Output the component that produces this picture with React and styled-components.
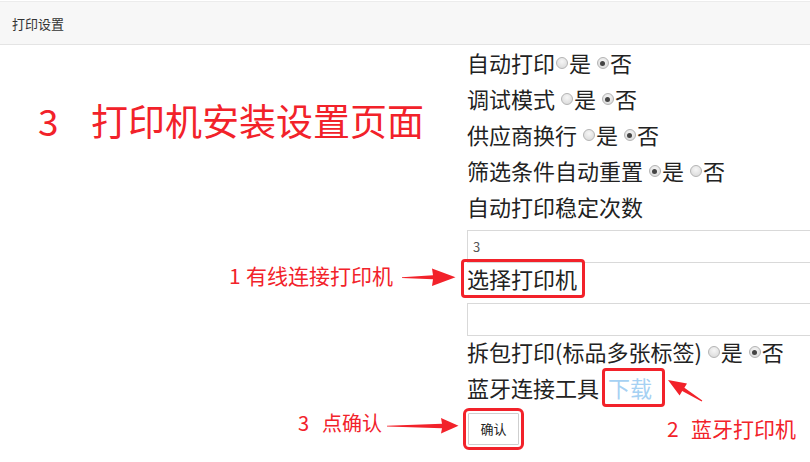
import React from "react";
import styled, { createGlobalStyle } from "styled-components";

const RED = "#f2222a";
const FONT = `"Noto Sans CJK SC", "Noto Sans", "Liberation Sans", sans-serif`;

const Global = createGlobalStyle`
  html, body { margin: 0; padding: 0; background: #fff; }
  body { font-family: ${FONT}; overflow: hidden; }
`;

const Page = styled.div`
  position: relative;
  width: 810px;
  height: 462px;
  overflow: hidden;
  background: #fff;
`;

const Header = styled.header`
  height: 42px;
  margin-top: 1px;
  border-top: 1px solid #ececec;
  border-bottom: 1px solid #e4e4e4;
  background: #f7f7f7;
  display: flex;
  align-items: center;
  padding-left: 12px;
  font-size: 13px;
  color: #333;
`;

const Body = styled.main`
  display: flex;
`;

const LeftPane = styled.section`
  width: 467px;
  flex: none;
  padding-top: 53px;
  box-sizing: border-box;
`;

const Title = styled.h1`
  margin: 0 0 0 38px;
  font-size: 37px;
  line-height: 44px;
  font-weight: 400;
  color: ${RED};
  display: flex;
`;

const TitleNum = styled.span`
  width: 53px;
`;

const Form = styled.section`
  flex: 1;
  padding-top: 2px;
  font-size: 22px;
  color: #222;
`;

const Row = styled.div`
  display: flex;
  align-items: center;
  height: 36px;
  box-sizing: border-box;
  padding-bottom: 6px;
  line-height: 30px;
  white-space: pre;
`;

const RadioDot = styled.span`
  display: inline-block;
  width: 12px;
  height: 12px;
  box-sizing: border-box;
  border-radius: 50%;
  border: 1px solid #b4b4b4;
  background: radial-gradient(circle at 50% 35%, #f6f6f6 0%, #d6d6d6 100%);
  margin: 2px 1px 0 1px;
  position: relative;
  &::after {
    content: "";
    display: ${(p) => (p.$checked ? "block" : "none")};
    position: absolute;
    left: 2.5px;
    top: 2.5px;
    width: 5px;
    height: 5px;
    border-radius: 50%;
    background: #444;
  }
`;

const TextInput = styled.div`
  width: 360px;
  height: 33px;
  box-sizing: border-box;
  border: 1px solid #d9d9d9;
  margin-top: ${(p) => p.$mt || 3}px;
  font-size: 13px;
  line-height: 31px;
  padding-left: 5px;
  color: #555;
`;

const Marked = styled.span`
  display: inline-block;
  line-height: 33px;
  margin: ${(p) => p.$m};
  padding: ${(p) => p.$p};
  border: 3px solid ${RED};
  border-radius: 4px;
`;

const Link = styled.span`
  color: #a6d1f3;
`;

const ConfirmBtn = styled.button`
  width: 51px;
  height: 32px;
  box-sizing: border-box;
  border: 1px solid #cfcfcf;
  background: #fff;
  font-family: ${FONT};
  font-size: 13px;
  color: #222;
  padding: 0;
  outline: 3px solid ${RED};
  outline-offset: 2px;
  border-radius: 1px;
  margin: 3px 0 0 1px;
`;

const Note = styled.div`
  position: absolute;
  left: ${(p) => p.$x}px;
  top: ${(p) => p.$y}px;
  font-size: ${(p) => p.$size || 21}px;
  line-height: 24px;
  color: ${RED};
  white-space: pre;
  display: flex;
`;

const NoteNum = styled.span`
  width: ${(p) => p.$w}px;
`;

const ArrowSvg = styled.svg`
  position: absolute;
  left: ${(p) => p.$x}px;
  top: ${(p) => p.$y}px;
  overflow: visible;
`;

function Radio({ checked }) {
  return <RadioDot $checked={checked} />;
}

export default function App() {
  return (
    <Page>
      <Global />
      <Header>打印设置</Header>
      <Body>
        <LeftPane>
          <Title>
            <TitleNum>3</TitleNum>打印机安装设置页面
          </Title>
        </LeftPane>
        <Form>
          <Row>
            自动打印<Radio />是 <Radio checked />否
          </Row>
          <Row>
            调试模式 <Radio />是 <Radio checked />否
          </Row>
          <Row>
            供应商换行 <Radio />是 <Radio checked />否
          </Row>
          <Row>
            筛选条件自动重置 <Radio checked />是 <Radio />否
          </Row>
          <Row>自动打印稳定次数</Row>
          <TextInput>3</TextInput>
          <Row>
            <Marked $m="0 0 0 -6px" $p="0 5px 0 3px">选择打印机</Marked>
          </Row>
          <TextInput $mt={4} />
          <Row>
            拆包打印(标品多张标签) <Radio />是 <Radio checked />否
          </Row>
          <Row>
            蓝牙连接工具
            <Marked $m="0 0 0 3px" $p="0 10px 0 3px">
              <Link>下载</Link>
            </Marked>
          </Row>
          <ConfirmBtn>确认</ConfirmBtn>
        </Form>
      </Body>

      <Note $x={229} $y={263}>
        <NoteNum $w={17}>1</NoteNum>有线连接打印机
      </Note>
      <ArrowSvg $x={402} $y={268} width="54" height="19" viewBox="0 0 54 19">
        <polygon points="0,9.3 31,7.3 30,0.5 53.5,9.3 30,18 31,11.3 0,9.9" fill={RED} />
      </ArrowSvg>

      <Note $x={298} $y={411} $size={20}>
        <NoteNum $w={24}>3</NoteNum>点确认
      </Note>
      <ArrowSvg $x={386} $y={417} width="73" height="18" viewBox="0 0 73 18">
        <polygon points="1,8.8 56,6.8 55,1 72.5,8.8 55,16.5 56,11.3 1,9.4" fill={RED} />
      </ArrowSvg>

      <Note $x={667} $y={416}>
        <NoteNum $w={24}>2</NoteNum>蓝牙打印机
      </Note>
      <ArrowSvg $x={660} $y={370} width="50" height="40" viewBox="0 0 50 40">
        <polygon
          points="8,10 27,13.5 24.4,17.7 42.3,30.6 41.7,31.4 22.2,21.1 19.6,25.4"
          fill={RED}
        />
      </ArrowSvg>
    </Page>
  );
}
